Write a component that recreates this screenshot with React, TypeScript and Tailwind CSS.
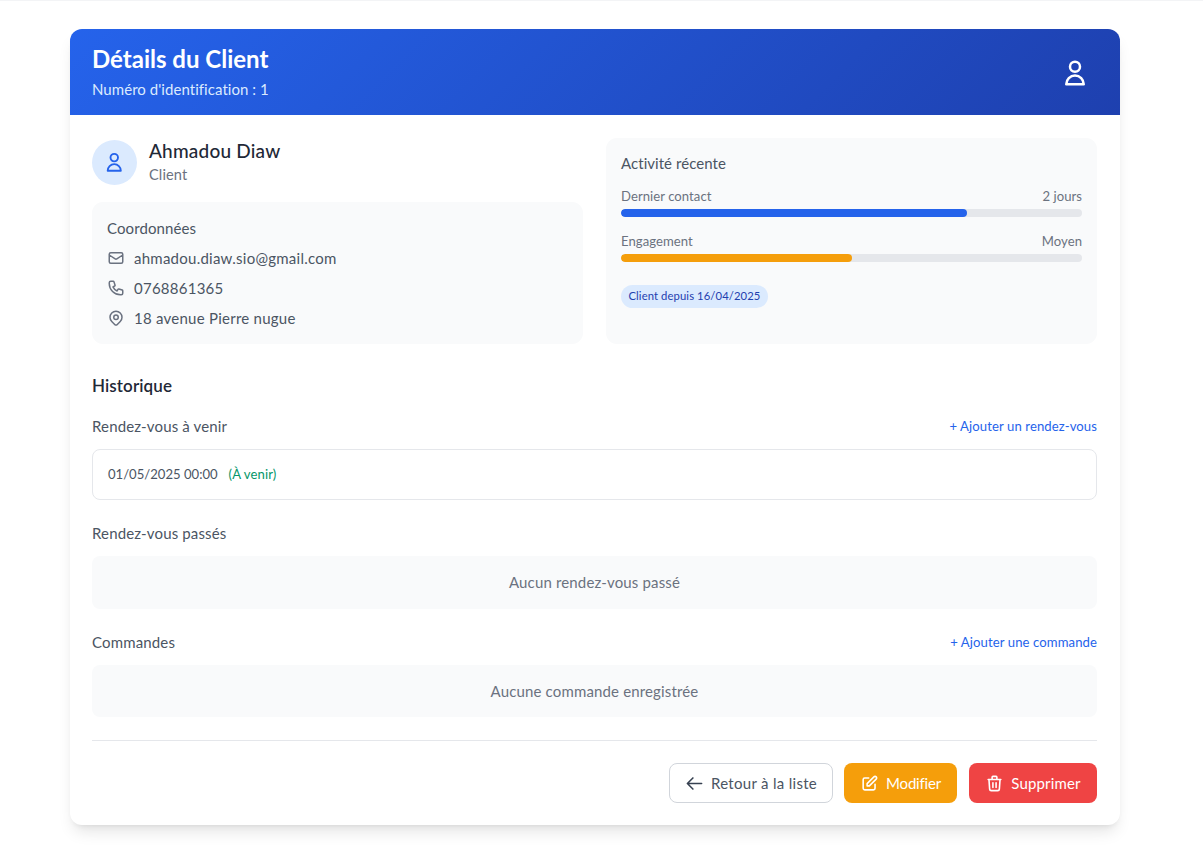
import type { ReactNode } from 'react'

function Icon({ d, className }: { d: string | string[]; className: string }) {
  const paths = Array.isArray(d) ? d : [d]
  return (
    <svg className={className} fill="none" viewBox="0 0 24 24" stroke="currentColor" strokeWidth={2} strokeLinecap="round" strokeLinejoin="round">
      {paths.map((p) => (
        <path key={p} d={p} />
      ))}
    </svg>
  )
}

const USER = 'M16 7a4 4 0 11-8 0 4 4 0 018 0zM12 14a7 7 0 00-7 7h14a7 7 0 00-7-7z'
const MAIL = 'M3 8l7.89 5.26a2 2 0 002.22 0L21 8M5 19h14a2 2 0 002-2V7a2 2 0 00-2-2H5a2 2 0 00-2 2v10a2 2 0 002 2z'
const PHONE = 'M3 5a2 2 0 012-2h3.28a1 1 0 01.948.684l1.498 4.493a1 1 0 01-.502 1.21l-2.257 1.13a11.042 11.042 0 005.516 5.516l1.13-2.257a1 1 0 011.21-.502l4.493 1.498a1 1 0 01.684.949V19a2 2 0 01-2 2h-1C9.716 21 3 14.284 3 6V5z'
const PIN = ['M17.657 16.657L13.414 20.9a1.998 1.998 0 01-2.827 0l-4.244-4.243a8 8 0 1111.314 0z', 'M15 11a3 3 0 11-6 0 3 3 0 016 0z']
const ARROW = 'M10 19l-7-7m0 0l7-7m-7 7h18'
const EDIT = 'M11 5H6a2 2 0 00-2 2v11a2 2 0 002 2h11a2 2 0 002-2v-5m-1.414-9.414a2 2 0 112.828 2.828L11.828 15H9v-2.828l8.586-8.586z'
const TRASH = 'M19 7l-.867 12.142A2 2 0 0116.138 21H7.862a2 2 0 01-1.995-1.858L5 7m5 4v6m4-6v6m1-10V4a1 1 0 00-1-1h-4a1 1 0 00-1 1v3M4 7h16'

function ContactRow({ icon, children }: { icon: string | string[]; children: ReactNode }) {
  return (
    <div className="flex items-center h-[30px] text-[15px] tracking-[0.25px] text-[#4b5563]">
      <Icon d={icon} className="w-[18px] h-[18px] mr-[9px] text-[#6b7280]" />
      {children}
    </div>
  )
}

function Meter({ label, value, percent, barClass }: { label: string; value: string; percent: number; barClass: string }) {
  return (
    <div className="mb-[14px]">
      <div className="flex justify-between h-[21px] pt-[1px] items-center text-[13.1px] tracking-[0.05px] text-[#6b7280]">
        <span>{label}</span>
        <span>{value}</span>
      </div>
      <div className="h-[8px] mt-[2px] rounded-full bg-[#e5e7eb] overflow-hidden">
        <div className={`h-full rounded-full ${barClass}`} style={{ width: `${percent}%` }} />
      </div>
    </div>
  )
}

function SectionHead({ title, action }: { title: string; action?: string }) {
  return (
    <div className="flex justify-between items-center h-[23px] mb-[11px]">
      <span className="text-[15px] tracking-[0.15px] text-[#4b5563]">{title}</span>
      {action && <span className="text-[13.1px] tracking-[0.1px] text-[#2563eb]">{action}</span>}
    </div>
  )
}

function Empty({ text, className }: { text: string; className: string }) {
  return <div className={`flex items-center justify-center rounded-[8px] bg-[#f9fafb] text-[15px] tracking-[0.15px] text-[#6b7280] ${className}`}>{text}</div>
}

export default function App() {
  return (
    <div className="min-h-[846px] bg-white border-t border-[#f3f4f6] pt-[28px] font-['Lato','Noto_Sans',sans-serif]">
      <div className="w-[1050px] ml-[70px] h-[796px] bg-white rounded-[12px] overflow-hidden shadow-[0_10px_15px_-3px_rgba(0,0,0,0.1),0_4px_6px_-4px_rgba(0,0,0,0.1)]">
        {/* Header */}
        <div className="h-[86px] pl-[22px] pr-[30px] flex items-center justify-between bg-[linear-gradient(135deg,#2563eb,#1e40af)] text-white">
          <div className="pb-[1px]">
            <h1 className="text-[24px] leading-[30px] font-bold">Détails du Client</h1>
            <p className="text-[15px] leading-[22px] mt-[4px] tracking-[0.05px] text-[#dbeafe]">Numéro d'identification : 1</p>
          </div>
          <Icon d={USER} className="w-[30px] h-[30px] mt-[2px]" />
        </div>

        <div className="pl-[22px] pr-[23px] pt-[22.5px]">
          <div className="grid grid-cols-2 gap-[23px]">
            {/* Profile */}
            <div>
              <div className="flex items-center h-[45px] mt-[2.5px] mb-[17px]">
                <div className="w-[45px] h-[45px] rounded-full bg-[#dbeafe] flex items-center justify-center mr-[12px] text-[#2563eb]">
                  <Icon d={USER} className="w-[22.5px] h-[22.5px]" />
                </div>
                <div>
                  <div className="text-[19px] leading-[24px] font-medium tracking-[0.2px] text-[#1f2937]">Ahmadou Diaw</div>
                  <div className="text-[14.6px] leading-[22px] mt-[1px] tracking-[0.1px] text-[#6b7280]">Client</div>
                </div>
              </div>
              <div className="h-[142px] rounded-[11px] bg-[#f9fafb] px-[15px] pt-[15px]">
                <div className="text-[15px] leading-[22px] tracking-[0.1px] text-[#4b5563] mb-[4px]">Coordonnées</div>
                <ContactRow icon={MAIL}>ahmadou.diaw.sio@gmail.com</ContactRow>
                <ContactRow icon={PHONE}>0768861365</ContactRow>
                <ContactRow icon={PIN}>18 avenue Pierre nugue</ContactRow>
              </div>
            </div>

            {/* Activity */}
            <div className="h-[206px] rounded-[11px] bg-[#f9fafb] px-[15px] pt-[14px]">
              <div className="text-[15px] leading-[22px] tracking-[0.05px] text-[#4b5563] mb-[12px]">Activité récente</div>
              <Meter label="Dernier contact" value="2 jours" percent={75} barClass="bg-[#2563eb]" />
              <Meter label="Engagement" value="Moyen" percent={50} barClass="bg-[#f59e0b]" />
              <span className="inline-flex items-center h-[23px] mt-[9px] px-[7.5px] rounded-full bg-[#dbeafe] text-[11.25px] tracking-[0.1px] text-[#1e40af]">
                Client depuis 16/04/2025
              </span>
            </div>
          </div>

          <h2 className="mt-[30px] text-[17px] leading-[24px] font-semibold tracking-[0.1px] text-[#1f2937] mb-[17px]">Historique</h2>

          <SectionHead title="Rendez-vous à venir" action="+ Ajouter un rendez-vous" />
          <div className="h-[51px] rounded-[8px] border border-[#e5e7eb] flex items-center px-[15px] text-[13.1px] mb-[22px]">
            <span className="text-[#4b5563]">01/05/2025 00:00</span>
            <span className="ml-[11px] tracking-[0.1px] text-[#059669]">(À venir)</span>
          </div>

          <SectionHead title="Rendez-vous passés" />
          <Empty text="Aucun rendez-vous passé" className="h-[53px] mb-[22px]" />

          <SectionHead title="Commandes" action="+ Ajouter une commande" />
          <Empty text="Aucune commande enregistrée" className="h-[52px]" />

          {/* Actions */}
          <div className="mt-[23px] pt-[22px] border-t border-[#e5e7eb] flex justify-end gap-[11px] text-[15px] tracking-[0.15px]">
            <button className="h-[40px] w-[164px] rounded-[8px] border border-[#d1d5db] bg-white text-[#4b5563] flex items-center justify-center tracking-[0.3px]">
              <Icon d={ARROW} className="w-[19px] h-[19px] mr-[7px] text-[#374151]" />
              Retour à la liste
            </button>
            <button className="h-[40px] w-[113px] rounded-[8px] bg-[#f59e0b] text-white flex items-center justify-center tracking-[-0.2px]">
              <Icon d={EDIT} className="w-[19px] h-[19px] mr-[7px]" />
              Modifier
            </button>
            <button className="h-[40px] w-[128px] ml-[1px] rounded-[8px] bg-[#ef4444] text-white flex items-center justify-center">
              <Icon d={TRASH} className="w-[19px] h-[19px] mr-[7px]" />
              Supprimer
            </button>
          </div>
        </div>
      </div>
    </div>
  )
}
